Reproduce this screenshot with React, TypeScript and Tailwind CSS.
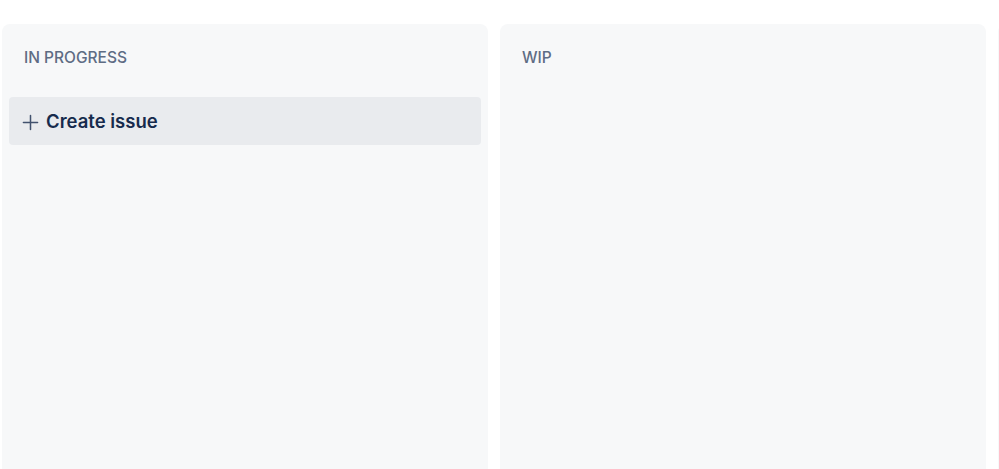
import React from 'react';

const columns = [
  { title: 'IN PROGRESS', showCreate: true },
  { title: 'WIP', showCreate: false },
  { title: '', showCreate: false },
];

const PlusIcon: React.FC = () => (
  <svg width="17" height="17" viewBox="0 0 18 18" fill="none" stroke="currentColor" strokeWidth="1.6" strokeLinecap="round">
    <path d="M9 1.5v15M1.5 9h15" />
  </svg>
);

const App: React.FC = () => {
  return (
    <div className="h-[469px] w-[999px] overflow-hidden bg-white pl-[2px] pt-[24px]" style={{ fontFamily: 'Inter, "Noto Sans", sans-serif' }}>
      <div className="flex gap-[12px]">
        {columns.map((col, i) => (
          <div key={i} className="flex h-[480px] w-[486px] shrink-0 flex-col rounded-[8px] bg-[#f7f8f9]">
            <div className="flex h-[66px] items-center pl-[22px] pt-[1px] text-[15.5px] font-medium text-[#5e6c84]">
              {col.title}
            </div>
            {col.showCreate && (
              <button className="mx-[7px] mt-[7px] flex h-[48px] items-center gap-[7px] rounded-[4px] bg-[#e9ebee] pl-[13px] pt-[2px] text-[18.5px] font-semibold text-[#172b4d]">
                <span className="text-[#42526e]"><PlusIcon /></span>
                Create issue
              </button>
            )}
          </div>
        ))}
      </div>
    </div>
  );
};

export default App;
